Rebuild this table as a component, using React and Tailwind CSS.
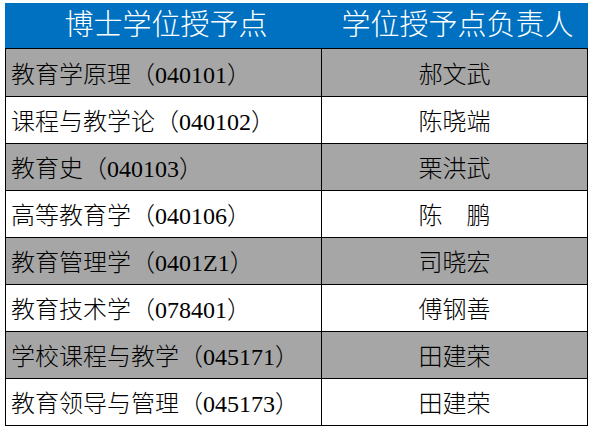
const rows = [
  { name: "教育学原理（040101）", head: "郝文武", gray: true },
  { name: "课程与教学论（040102）", head: "陈晓端", gray: false },
  { name: "教育史（040103）", head: "栗洪武", gray: true },
  { name: "高等教育学（040106）", head: "陈　鹏", gray: false },
  { name: "教育管理学（0401Z1）", head: "司晓宏", gray: true },
  { name: "教育技术学（078401）", head: "傅钢善", gray: false },
  { name: "学校课程与教学（045171）", head: "田建荣", gray: true },
  { name: "教育领导与管理（045173）", head: "田建荣", gray: false },
];

const font = {
  fontFamily: '"Liberation Serif", "Noto Sans CJK SC", serif',
};

export default function App() {
  return (
    <div className="w-[592px] h-[429px] bg-white pt-[3px] pl-[5px]" style={font}>
      <div className="w-[583px]">
        {/* header */}
        <div className="flex h-[46px] bg-[#0070c0] text-white text-[29px] font-light border-b border-black">
          <div className="w-[317px] flex items-center justify-center pl-[5px]">博士学位授予点</div>
          <div className="flex-1 flex items-center justify-center pl-[5px]">学位授予点负责人</div>
        </div>

        {/* body */}
        <div className="border-l border-r border-b border-black">
          {rows.map((r, i) => (
            <div
              key={i}
              className={`flex h-[47px] text-[24px] font-light text-black ${i > 0 ? "border-t border-black" : ""} ${r.gray ? "bg-[#a6a6a6]" : "bg-white"}`}
            >
              <div className="w-[316px] border-r border-black flex items-center pl-[5px] pt-[4px]">
                {r.name}
              </div>
              <div className="flex-1 flex items-center justify-center pt-[4px]">{r.head}</div>
            </div>
          ))}
        </div>
      </div>
    </div>
  );
}
